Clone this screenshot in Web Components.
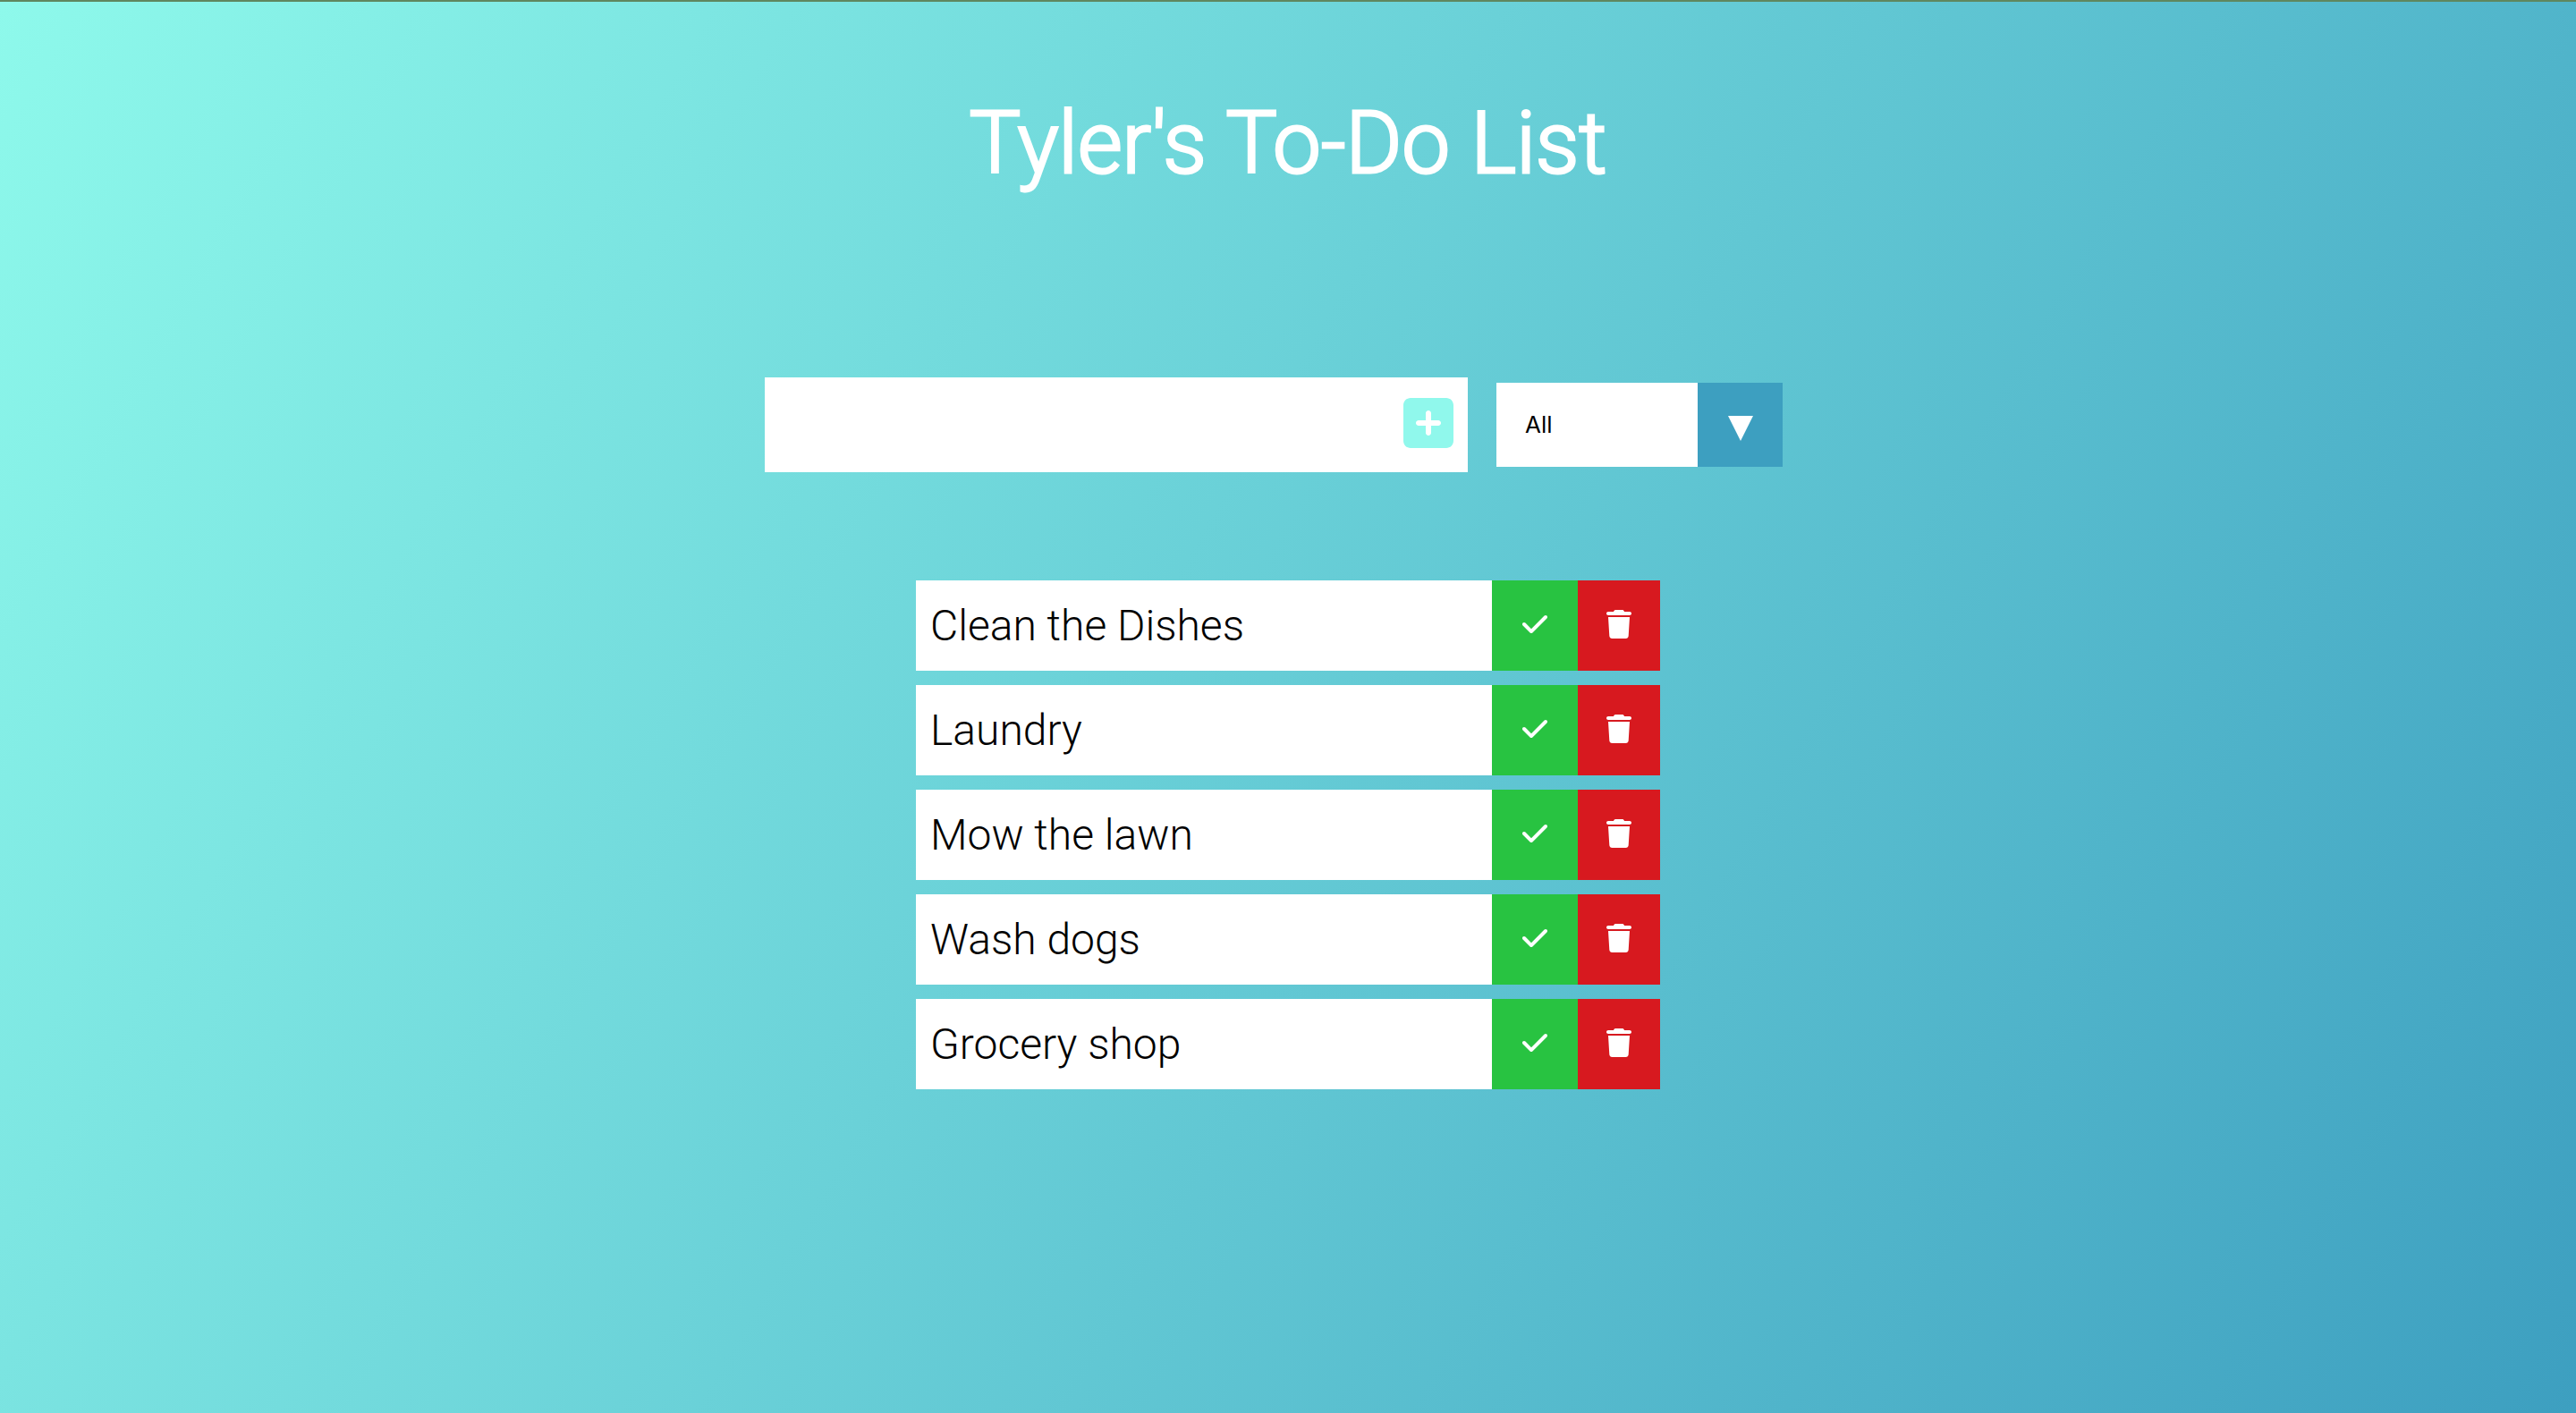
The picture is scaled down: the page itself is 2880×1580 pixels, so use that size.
<!DOCTYPE html>
<html lang="en">
<head>
<meta charset="utf-8">
<title>Tyler's To-Do List</title>
<style>
  html { min-height: 100%; display: flex; }
  body {
    margin: 0; flex: 1; min-height: 100vh; box-sizing: border-box;
    border-top: 2px solid #5f875f;
    background: linear-gradient(120deg, #8ef9eb, #3d9fc0) border-box;
    font-family: Roboto, sans-serif; font-weight: 300; color: #000;
  }
</style>
</head>
<body>
<todo-app></todo-app>
<script>
const define = (name, html, setup) => {
  const template = document.createElement('template');
  template.innerHTML = html;
  customElements.define(name, class extends HTMLElement {
    constructor() {
      super();
      this.attachShadow({ mode: 'open' }).append(template.content.cloneNode(true));
      if (setup) setup(this.shadowRoot, this);
    }
  });
};

define('todo-header', `
  <style>
    :host { display: block; text-align: center; color: #fff; }
    h1 { margin: 0; font-size: 96px; line-height: 120px; font-weight: 300; -webkit-text-stroke: 3px #fff; }
  </style>
  <h1><slot></slot></h1>`);

define('todo-form', `
  <style>
    :host { display: block; }
    form { display: flex; width: 786px; height: 106px; background: #fff; }
    input { flex: 1; min-width: 0; border: 0; outline: 0; padding: 16px; background: none; font: inherit; font-size: 48px; }
    button { display: flex; align-items: center; justify-content: center; border: 0; padding: 0 16px 4px; background: #fff; color: #90f8ec; cursor: pointer; }
    svg { display: block; width: 56px; height: 64px; fill: currentColor; }
  </style>
  <form>
    <input type="text" aria-label="New task">
    <button type="submit" aria-label="Add task">
      <svg viewBox="0 0 448 512"><path d="M64 32C28.700 32 0 60.700 0 96V416c0 35.300 28.700 64 64 64H384c35.300 0 64-28.700 64-64V96c0-35.300-28.700-64-64-64H64zM200 344V280H136c-13.300 0-24-10.700-24-24s10.700-24 24-24h64V168c0-13.300 10.700-24 24-24s24 10.700 24 24v64h64c13.300 0 24 10.700 24 24s-10.700 24-24 24H248v64c0 13.300-10.700 24-24 24s-24-10.700-24-24z"/></svg>
    </button>
  </form>`, root => {
    root.querySelector('form').addEventListener('submit', e => {
      e.preventDefault();
      const input = root.querySelector('input');
      const text = input.value.trim();
      if (text) root.host.dispatchEvent(new CustomEvent('add', { detail: text }));
      input.value = '';
    });
  });

define('todo-filter', `
  <style>
    :host { display: block; margin: 0 32px; }
    label { display: flex; width: 320px; height: 94px; background: #fff; }
    select { flex: 1; min-width: 0; appearance: none; border: 0; border-radius: 0; outline: 0; padding: 0 32px 2px; background: #fff; color: #000; font-family: Inter, sans-serif; font-size: 26px; font-weight: 400; cursor: pointer; }
    span { display: flex; align-items: center; justify-content: center; width: 95px; background: #3d9fc0; }
    svg { width: 28px; height: 28px; fill: #fff; margin-top: 8px; }
  </style>
  <label>
    <select aria-label="Filter tasks"><option>All</option><option>Completed</option><option>Uncompleted</option></select>
    <span><svg viewBox="0 0 28 28" aria-hidden="true"><path d="M0 0h28L14 28z"/></svg></span>
  </label>`);

define('todo-item', `
  <style>
    :host { display: flex; height: 101px; background: #fff; }
    :host([done]) { opacity: .5; }
    p { flex: 1; margin: 0; padding: 0 16px; align-self: center; font-size: 48px; line-height: 58px; }
    button { display: flex; align-items: center; justify-content: center; border: 0; padding: 0; color: #fff; cursor: pointer; }
    .done { width: 96px; background: #28c341; }
    .remove { width: 92px; background: #d7191f; }
    svg { display: block; width: 28px; height: 32px; margin-bottom: 4px; fill: currentColor; }
  </style>
  <p><slot></slot></p>
  <button class="done" type="button" aria-label="Complete task"><svg viewBox="0 0 448 512"><path d="M438.600 105.400c12.500 12.500 12.500 32.800 0 45.300l-256 256c-12.500 12.500-32.800 12.500-45.300 0l-128-128c-12.500-12.500-12.500-32.800 0-45.300s32.800-12.500 45.300 0L160 338.700 393.400 105.400c12.500-12.500 32.800-12.500 45.300 0z"/></svg></button>
  <button class="remove" type="button" aria-label="Delete task"><svg viewBox="0 0 448 512"><path d="M135.200 17.700C140.600 6.800 151.700 0 163.800 0H284.200c12.100 0 23.200 6.800 28.600 17.700L320 32h96c17.700 0 32 14.300 32 32s-14.300 32-32 32H32C14.300 96 0 81.700 0 64S14.300 32 32 32h96l7.200-14.300zM32 128H416L394.800 467c-1.600 25.300-22.600 45-47.900 45H101.100c-25.300 0-46.300-19.700-47.900-45L32 128z"/></svg></button>`, (root, host) => {
    root.querySelector('.done').addEventListener('click', () => host.toggleAttribute('done'));
    root.querySelector('.remove').addEventListener('click', () => host.remove());
  });

define('todo-list', `
  <style>
    :host { display: flex; flex-direction: column; gap: 16px; width: 832px; }
  </style>
  <slot></slot>`);

define('todo-app', `
  <style>
    :host { display: flex; flex-direction: column; align-items: center; padding-top: 98px; }
    .controls { display: flex; align-items: center; margin: 202px 0 121px; }
  </style>
  <todo-header>Tyler's To-Do List</todo-header>
  <div class="controls"><todo-form></todo-form><todo-filter></todo-filter></div>
  <todo-list>
    <todo-item>Clean the Dishes</todo-item>
    <todo-item>Laundry</todo-item>
    <todo-item>Mow the lawn</todo-item>
    <todo-item>Wash dogs</todo-item>
    <todo-item>Grocery shop</todo-item>
  </todo-list>`, root => {
    root.querySelector('todo-form').addEventListener('add', e => {
      const item = document.createElement('todo-item');
      item.textContent = e.detail;
      root.querySelector('todo-list').append(item);
    });
  });
</script>
</body>
</html>
